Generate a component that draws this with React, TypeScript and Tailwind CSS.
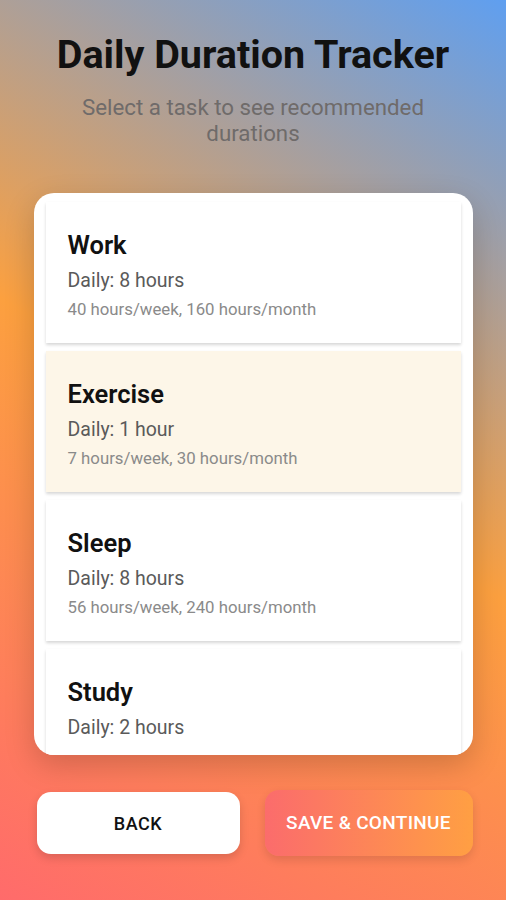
const tasks = [
  { name: 'Work', daily: 'Daily: 8 hours', detail: '40 hours/week, 160 hours/month' },
  { name: 'Exercise', daily: 'Daily: 1 hour', detail: '7 hours/week, 30 hours/month', selected: true },
  { name: 'Sleep', daily: 'Daily: 8 hours', detail: '56 hours/week, 240 hours/month' },
  { name: 'Study', daily: 'Daily: 2 hours' },
];

interface TaskItemProps {
  name: string;
  daily: string;
  detail?: string;
  selected?: boolean;
}

function TaskItem({ name, daily, detail, selected = false }: TaskItemProps) {
  return (
    <div
      className={`mx-[12px] shrink-0 h-[141px] px-[22px] pt-[30px] shadow-[0_2px_3px_rgba(0,0,0,0.16)] ${
        selected ? 'bg-[#fdf6e8]' : 'bg-white'
      }`}
    >
      <div className="text-[25.5px] leading-[26px] font-semibold text-[#111]">{name}</div>
      <div className="mt-[12px] text-[19.5px] leading-[22px] text-[#5a5a5a]">{daily}</div>
      {detail && <div className="mt-[8px] text-[16.8px] leading-[18px] text-[#8a8a8a]">{detail}</div>}
    </div>
  );
}

export default function App() {
  return (
    <div
      className="w-[506px] h-[900px] flex flex-col items-center bg-[linear-gradient(31deg,#ff6b6b_0%,#fca03f_50%,#5f9ff0_100%)]"
      style={{ fontFamily: 'Roboto, "Noto Sans", sans-serif' }}
    >
      <h1 className="mt-[33px] text-[39.5px] leading-[44px] font-bold text-[#111]">Daily Duration Tracker</h1>
      <p className="mt-[17px] px-[70px] text-center text-[22.3px] leading-[26px] text-[#6f6b6a]">
        Select a task to see recommended durations
      </p>

      <div className="mt-[47px] w-[439px] h-[562px] bg-white rounded-[20px] overflow-hidden shadow-[0_10px_30px_rgba(0,0,0,0.18)]">
        <div className="flex flex-col gap-[8px] pt-[9px]">
          {tasks.map((t) => (
            <TaskItem key={t.name} {...t} />
          ))}
        </div>
      </div>

      <div className="mt-[35px] w-[439px] flex items-center justify-between">
        <button className="ml-[3px] w-[203px] h-[62px] bg-white rounded-[14px] text-[18px] font-medium tracking-[0.5px] text-[#111] shadow-[0_4px_10px_rgba(0,0,0,0.15)]">
          BACK
        </button>
        <button className="w-[208px] h-[66px] rounded-[14px] bg-[linear-gradient(90deg,#fb6c6c,#ff9f43)] text-[19px] font-medium tracking-[0.3px] text-white shadow-[0_4px_10px_rgba(0,0,0,0.12)]">
          SAVE &amp; CONTINUE
        </button>
      </div>
    </div>
  );
}
